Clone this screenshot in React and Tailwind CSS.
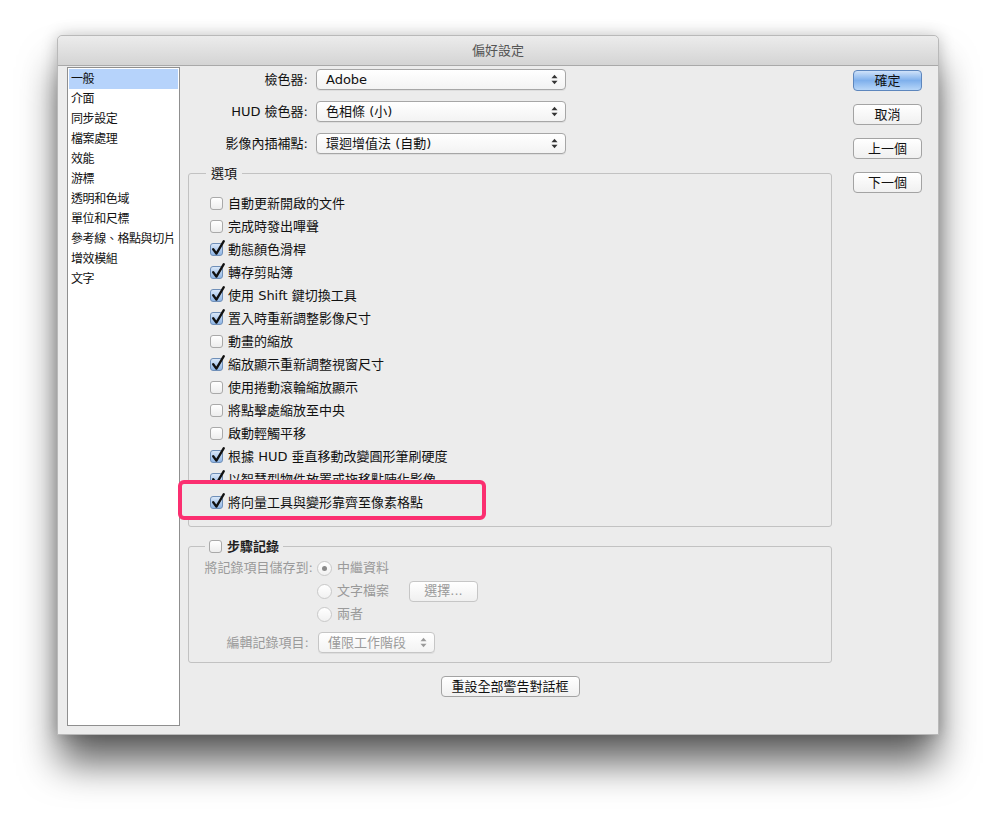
import React from 'react';

const FONT = "font-['DejaVu_Sans','Noto_Sans_CJK_TC',sans-serif]";

const sections = [
  '一般', '介面', '同步設定', '檔案處理', '效能', '游標',
  '透明和色域', '單位和尺標', '參考線、格點與切片', '增效模組', '文字',
];

const options = [
  { label: '自動更新開啟的文件', on: false },
  { label: '完成時發出嗶聲', on: false },
  { label: '動態顏色滑桿', on: true },
  { label: '轉存剪貼簿', on: true },
  { label: '使用 Shift 鍵切換工具', on: true },
  { label: '置入時重新調整影像尺寸', on: true },
  { label: '動畫的縮放', on: false },
  { label: '縮放顯示重新調整視窗尺寸', on: true },
  { label: '使用捲動滾輪縮放顯示', on: false },
  { label: '將點擊處縮放至中央', on: false },
  { label: '啟動輕觸平移', on: false },
  { label: '根據 HUD 垂直移動改變圓形筆刷硬度', on: true },
  { label: '以智慧型物件放置或拖移點陣化影像', on: true },
];

function Checkbox({ on }) {
  return (
    <span
      className={`relative w-[13px] h-[13px] shrink-0 rounded-[3px] border ${
        on
          ? 'border-[#6f8fb8] bg-linear-to-b from-[#d9e7f8] to-[#8fb6e6]'
          : 'border-[#a9a9a9] bg-linear-to-b from-white to-[#ededed]'
      }`}
    >
      {on && (
        <svg className="absolute left-[0px] top-[-4px] overflow-visible" width="14" height="16" viewBox="0 0 14 16">
          <path d="M2.2 9.2 L5.4 13.6 L12.8 1.2" fill="none" stroke="#111" strokeWidth="2.3" strokeLinecap="round" strokeLinejoin="round" />
        </svg>
      )}
    </span>
  );
}

function Radio({ on }) {
  return (
    <span className="w-[15px] h-[15px] shrink-0 rounded-full border border-[#c9c9c9] bg-linear-to-b from-white to-[#f1f1f1] flex items-center justify-center">
      {on && <span className="w-[5px] h-[5px] rounded-full bg-[#8a8a8a]" />}
    </span>
  );
}

function Arrows({ dim }) {
  const c = dim ? '#9a9a9a' : '#333';
  return (
    <svg width="7" height="11" viewBox="0 0 7 11" className="shrink-0">
      <path d="M0.5 4.2 L3.5 0.8 L6.5 4.2 Z" fill={c} />
      <path d="M0.5 6.8 L3.5 10.2 L6.5 6.8 Z" fill={c} />
    </svg>
  );
}

function Select({ value, className = '', dim }) {
  return (
    <div
      className={`h-[21px] rounded-[4px] border border-[#a6a6a6] bg-linear-to-b from-white to-[#f3f3f3] shadow-[0_1px_0_rgba(0,0,0,0.06)] flex items-center pl-[9px] pr-[7px] ${className}`}
    >
      <span className={`flex-1 text-[13px] ${dim ? 'text-[#9b9b9b]' : 'text-[#111]'}`}>{value}</span>
      <Arrows dim={dim} />
    </div>
  );
}

function PushButton({ children, primary, className = '' }) {
  return (
    <div
      className={`h-[21px] rounded-[4px] border flex items-center justify-center text-[13px] text-[#111] ${
        primary
          ? 'border-[#5d86bd] bg-linear-to-b from-[#cfe2f9] via-[#7fb0ec] to-[#b7d6f8]'
          : 'border-[#a3a3a3] bg-linear-to-b from-white to-[#f0f0f0]'
      } ${className}`}
    >
      {children}
    </div>
  );
}

export default function App() {
  return (
    <div className={`w-[996px] h-[815px] bg-white pt-[35px] pl-[57px] ${FONT}`}>
      <div className="w-[882px] h-[700px] bg-[#ececec] rounded-t-[5px] border border-[#b9b9b9] shadow-[0_30px_38px_-2px_rgba(0,0,0,0.62),0_0_16px_rgba(0,0,0,0.22)] flex flex-col">
        {/* title bar */}
        <div className="h-[30px] rounded-t-[5px] bg-linear-to-b from-[#ececec] to-[#d4d4d4] border-b border-[#a9a9a9] flex items-center justify-center text-[13px] text-[#555]">
          偏好設定
        </div>

        <div className="flex-1 flex pl-[9px] pr-[16px]">
          {/* sidebar */}
          <div className="mt-[1px] w-[113px] h-[659px] bg-white border border-[#8f8f8f] p-[1px] overflow-hidden">
            {sections.map((s, i) => (
              <div
                key={s}
                className={`h-[20px] flex items-center pl-[2px] text-[12px] text-[#111] whitespace-nowrap tracking-[-0.4px] ${i === 0 ? 'bg-[#b6d3fb]' : ''}`}
              >
                {s}
              </div>
            ))}
          </div>

          {/* main column */}
          <div className="ml-[8px] w-[644px] pt-[3px]">
            <div className="flex flex-col gap-[11px]">
              {[
                ['檢色器:', 'Adobe'],
                ['HUD 檢色器:', '色相條 (小)'],
                ['影像內插補點:', '環迴增值法 (自動)'],
              ].map(([l, v]) => (
                <div key={l} className="flex items-center h-[21px]">
                  <span className="w-[120px] text-right text-[13px] text-[#111]">{l}</span>
                  <Select value={v} className="ml-[8px] w-[250px]" />
                </div>
              ))}
            </div>

            {/* options group */}
            <div className="relative mt-[19px] border border-[#c2c2c2] rounded-[3px] pt-[18px] pb-[12px] pl-[21px]">
              <span className="absolute left-[17px] top-[-10px] px-[5px] bg-[#ececec] text-[13px] text-[#111]">選項</span>
              {options.map((o) => (
                <div key={o.label} className="h-[23px] flex items-center gap-[5px] text-[13px] text-[#111]">
                  <Checkbox on={o.on} />
                  <span>{o.label}</span>
                </div>
              ))}
              <div className="relative h-[23px] flex items-center">
                <div className="absolute left-[-32px] top-[-11px] w-[308px] h-[40px] rounded-[6px] border-[4px] border-[#fb2f70] bg-[#ececec]" />
                <div className="relative flex items-center gap-[5px] text-[13px] text-[#111]">
                  <Checkbox on />
                  <span>將向量工具與變形靠齊至像素格點</span>
                </div>
              </div>
            </div>

            {/* history log group */}
            <div className="relative mt-[19px] border border-[#c2c2c2] rounded-[3px] pt-[11px] pb-[9px]">
              <div className="absolute left-[16px] top-[-10px] px-[4px] bg-[#ececec] flex items-center gap-[5px] text-[13px] text-[#222] font-semibold">
                <Checkbox on={false} />
                <span>步驟記錄</span>
              </div>
              <div className="flex text-[13px] text-[#9a9a9a]">
                <span className="w-[124px] text-right h-[20px] leading-[20px]">將記錄項目儲存到:</span>
                <div className="ml-[4px] flex flex-col gap-[3px]">
                  <div className="h-[20px] flex items-center gap-[5px]">
                    <Radio on />
                    <span>中繼資料</span>
                  </div>
                  <div className="h-[20px] flex items-center gap-[5px]">
                    <Radio />
                    <span>文字檔案</span>
                    <PushButton className="ml-[15px] w-[69px] text-[#9a9a9a]! border-[#c6c6c6]!">選擇...</PushButton>
                  </div>
                  <div className="h-[20px] flex items-center gap-[5px]">
                    <Radio />
                    <span>兩者</span>
                  </div>
                </div>
              </div>
              <div className="mt-[8px] flex items-center text-[13px] text-[#9a9a9a]">
                <span className="w-[120px] text-right">編輯記錄項目:</span>
                <Select value="僅限工作階段" dim className="ml-[9px] w-[117px] border-[#c6c6c6]!" />
              </div>
            </div>

            <div className="mt-[13px] flex justify-center">
              <PushButton className="w-[139px]">重設全部警告對話框</PushButton>
            </div>
          </div>

          {/* right buttons */}
          <div className="ml-[21px] pt-[4px] flex flex-col gap-[13px]">
            <PushButton primary className="w-[69px]">確定</PushButton>
            <PushButton className="w-[69px]">取消</PushButton>
            <PushButton className="w-[69px]">上一個</PushButton>
            <PushButton className="w-[69px]">下一個</PushButton>
          </div>
        </div>
      </div>
    </div>
  );
}
